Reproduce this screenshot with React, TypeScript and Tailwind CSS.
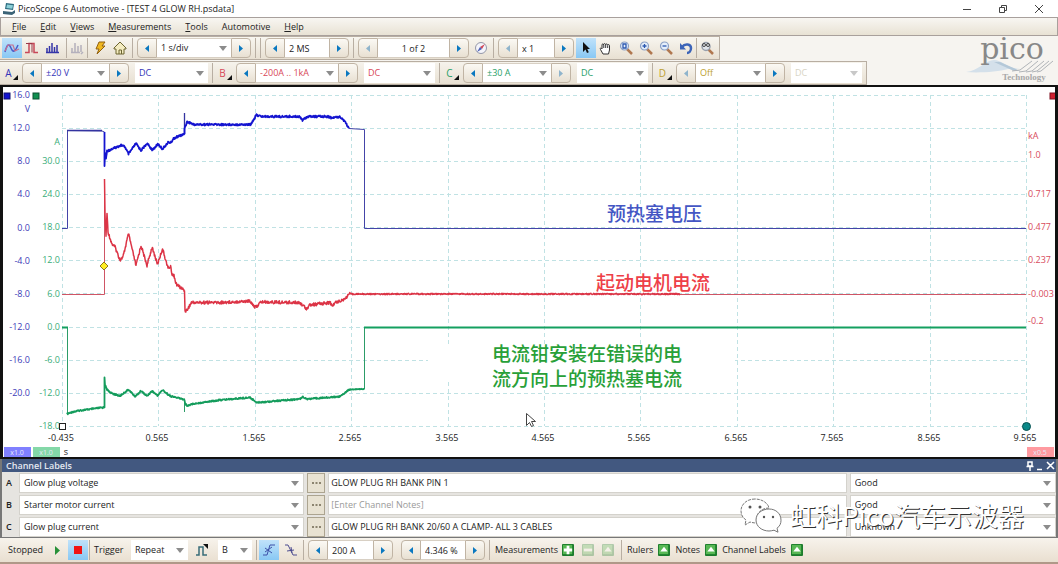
import React from "react";
import { clsx } from "clsx";

type Point = [number, number];

const blueTrace: Point[] = [
  [104.5, 132], [104.5, 167], [105, 152], [106, 159], [107, 151], [112, 149],
  [117, 147], [121, 145], [125, 147], [128.5, 154], [136, 143.5], [141, 150.5],
  [147, 143.5], [152.5, 150], [158, 144], [162.5, 149], [168, 142.5], [171, 142.5],
  [173.5, 138.5], [178, 136.5], [184.5, 134], [184.5, 128], [187, 122], [191, 123],
  [193, 124.5], [250.5, 124.5], [256.5, 115], [261.5, 116.5], [300, 116.5], [302.5, 120],
  [307.5, 116.5], [328, 116.5], [331.5, 118], [340, 116.5], [345, 121.5], [349, 128.5],
];

const redTrace: Point[] = [
  [104.5, 179], [105, 215], [106, 236], [107, 213], [108, 232], [112, 244],
  [115, 247], [120, 260], [123, 257], [128.5, 234], [136, 265.5], [141, 245.5],
  [147, 265.5], [152, 247.5], [157.5, 264], [162.5, 249], [168, 268], [171, 267],
  [172, 275], [174, 275], [176, 284], [184.5, 290.5], [185, 311], [187, 310],
  [191.5, 302.5], [220, 302.5], [250, 301], [255.5, 307.5], [261, 302], [300, 302.5],
  [306.5, 308.5], [310, 305], [330, 302.5], [332.5, 306], [336, 302], [345, 299],
  [349, 294], [680, 294],
];

const greenTrace: Point[] = [
  [67, 414], [72, 412], [80, 410.5], [103, 407.5], [104.5, 407], [104.5, 377], [105, 385],
  [107, 389.5], [111, 393], [120, 396], [128.5, 389.5], [135, 396.5], [141, 391],
  [147, 396], [152, 391], [157.5, 395.5], [162.5, 390], [170, 396], [184.5, 399.5],
  [185, 403.5], [187.5, 406], [191.5, 404], [220, 400], [250, 397.5], [257, 402.5],
  [300, 399], [302.5, 396.5], [307, 399], [340, 396.5], [349, 389.5], [364.5, 389],
];

// repeatable noise, so that the traces don't change between renders
function noise(i: number) {
  const n = Math.sin(i * 12.9898) * 43758.5453;
  return (n - Math.floor(n)) * 2 - 1;
}

function tracePath(points: Point[], amp: number) {
  let d = `M${points[0][0]} ${points[0][1]}`;
  let n = 0;
  for (let i = 1; i < points.length; i++) {
    const [x0, y0] = points[i - 1];
    const [x1, y1] = points[i];
    const steps = Math.max(1, Math.round((x1 - x0) / 0.4));
    for (let s = 1; s <= steps; s++) {
      const x = x0 + ((x1 - x0) * s) / steps;
      const a = x > 350 ? amp * 0.4 : amp;
      const y = y0 + ((y1 - y0) * s) / steps + noise(n++) * a;
      d += `L${x.toFixed(1)} ${y.toFixed(1)}`;
    }
  }
  return d;
}

const gridX = Array.from({ length: 11 }, (_, i) => Math.round(62 + i * 96.4) + 0.5);
const gridY = Array.from({ length: 11 }, (_, i) => Math.round(94.5 + i * 33.15) + 0.5);

const voltLabels = ["16.0", "12.0", "8.0", "4.0", "0.0", "-4.0", "-8.0", "-12.0", "-16.0", "-20.0"];
const ampLabels = ["30.0", "24.0", "18.0", "12.0", "6.0", "0.0", "-6.0", "-12.0", "-18.0"];
const timeLabels = ["-0.435", "0.565", "1.565", "2.565", "3.565", "4.565", "5.565", "6.565", "7.565", "8.565", "9.565"];
const kiloAmpLabels: [string, number][] = [
  ["kA", 139], ["1.0", 158], ["0.717", 197], ["0.477", 230],
  ["0.237", 263], ["-0.003", 297], ["-0.2", 324],
];

const ScopeChart = () => (
  <svg viewBox="3 87 1052 370" className="block w-full h-auto bg-white" fontSize="9" role="img" aria-label="Scope view">
    <g stroke="#c0e2e4" strokeDasharray="4 3">
      {gridX.map((x) => (
        <line key={x} x1={x} x2={x} y1="95" y2="426" />
      ))}
      {gridY.map((y) => (
        <line key={y} x1="62" x2="1026" y1={y} y2={y} />
      ))}
    </g>
    <rect x="428" y="344" width="307" height="36" fill="#fff" />
    <rect x="486" y="370" width="206" height="20" fill="#fff" />

    <g fill="#3c3cb8" textAnchor="end">
      {voltLabels.map((t, i) => (
        <text key={t} x="30" y={98 + Math.round(i * 33.15)}>{t}</text>
      ))}
      <text x="30" y="112">V</text>
    </g>
    <g fill="#38ac78" textAnchor="end">
      <text x="60" y="145">A</text>
      {ampLabels.map((t, i) => (
        <text key={t} x="60" y={164 + Math.round(i * 33.15)}>{t}</text>
      ))}
    </g>
    <g fill="#d84c5c">
      {kiloAmpLabels.map(([t, y]) => (
        <text key={t} x="1028" y={y}>{t}</text>
      ))}
    </g>
    <g fill="#222" textAnchor="middle">
      {timeLabels.map((t, i) => (
        <text key={t} x={Math.round(61 + i * 96.4)} y="441">{t}</text>
      ))}
      <text x="66" y="455">s</text>
    </g>

    <g fill="none" strokeLinejoin="round">
      <path d="M62 228.500H67.500V130.500L102 131L104.500 132V140M349 128.500L364.500 129.500V228.500H1026" stroke="#4444a8" />
      <path d="M67 130.500H102M184.500 134V113" stroke="#3434a0" strokeWidth="1.300" />
      <path d={tracePath(blueTrace, 1)} stroke="#1414d0" strokeWidth="1.800" />
      <path d="M62 294.500H104.500V179M680 294.500H1026" stroke="#cf5565" />
      <path d={tracePath(redTrace, 1.6)} stroke="#dc3446" strokeWidth="1.500" />
      <path d="M62 327.500H67.500V414M184.500 399V412M364.500 389V327.500" stroke="#2c9c68" />
      <path d="M364 327.500H1026M62 327.500H68" stroke="#14a060" strokeWidth="2" />
      <path d={tracePath(greenTrace, 0.7)} stroke="#149c5c" strokeWidth="1.800" />
    </g>

    <path d="M104 262l4 4-4 4-4-4z" fill="#ffee22" stroke="#8a7a20" />
    <rect x="59.500" y="423.500" width="6" height="6" fill="#fff" stroke="#222" />
    <circle cx="1026.500" cy="426.500" r="4" fill="#0a8888" stroke="#075050" />
    <rect x="4" y="93" width="6" height="6" fill="#1414d0" stroke="#101070" />
    <rect x="33" y="93" width="6" height="6" fill="#109050" stroke="#0a5030" />
    <rect x="1050" y="93" width="6" height="6" fill="#d02030" stroke="#801020" />

    <rect x="4" y="447" width="27" height="10" fill="#8080ff" />
    <rect x="33" y="447" width="27" height="10" fill="#84d8a8" />
    <rect x="1027" y="447" width="27" height="10" fill="#ff9aa0" />
    <g fill="#e4e8f8" fontSize="7" textAnchor="middle">
      <text x="17" y="455">x1.0</text>
      <text x="46" y="455">x1.0</text>
      <text x="1040" y="455">x0.5</text>
    </g>

    <g className="font-['Liberation_Serif','Noto_Sans_CJK_SC',serif]" fontSize="19" fontWeight="500">
      <text x="607" y="221" fill="#4456c4">预热塞电压</text>
      <text x="596" y="290" fill="#ee4048">起动电机电流</text>
      <g fill="#28a038">
        <text x="492" y="361">电流钳安装在错误的电</text>
        <text x="492" y="386">流方向上的预热塞电流</text>
      </g>
    </g>
    <path d="M526.500 413.500v12l3-3 2 4 2-1-2-4h4z" fill="#fff" stroke="#444" />
  </svg>
);

const Caret = ({ className }: { className?: string }) => (
  <svg viewBox="0 0 8 5" className={clsx("h-[5px] w-2 shrink-0", className)}>
    <path d="M0 0h8L4 5z" fill="currentColor" />
  </svg>
);

type PickProps = { id?: string; value: string; label: string; className?: string; disabled?: boolean };

const Pick = ({ id, value, label, className, disabled }: PickProps) => (
  <div className={clsx("relative flex h-full bg-white", className)}>
    <select
      id={id}
      aria-label={label}
      defaultValue={value}
      disabled={disabled}
      className="w-full appearance-none bg-transparent pl-1 pr-4 outline-none"
    >
      <option>{value}</option>
    </select>
    <Caret className={clsx("pointer-events-none absolute right-1 top-1/2 -mt-0.5", disabled ? "text-[#c8c8c8]" : "text-[#8c8c8c]")} />
  </div>
);

const StepButton = ({ dir, off, label }: { dir: "left" | "right"; off?: boolean; label: string }) => (
  <button
    type="button"
    aria-label={label}
    className={clsx(
      "flex h-full w-5 shrink-0 items-center justify-center border border-[#c0b4a4] bg-linear-to-b from-[#fbf9f4] to-[#e8e0d2]",
      dir === "left" ? "rounded-l" : "rounded-r",
      off ? "text-[#8fb4cc]" : "text-[#0a78c0]"
    )}
  >
    <svg viewBox="0 0 4 7" className="h-[7px] w-1">
      <path d={dir === "left" ? "M4 0v7L0 3.500z" : "M0 0v7l4-3.500z"} fill="currentColor" />
    </svg>
  </button>
);

type StepperProps = {
  label: string;
  value: string;
  width: string;
  pick?: boolean;
  prevOff?: boolean;
  nextOff?: boolean;
  center?: boolean;
};

const Stepper = ({ label, value, width, pick, prevOff, nextOff, center }: StepperProps) => (
  <div className="flex h-5 shrink-0">
    <StepButton dir="left" off={prevOff} label={`${label} down`} />
    {pick ? (
      <Pick label={label} value={value} className={clsx(width, "border-y border-[#d8d0c4]")} />
    ) : (
      <input
        aria-label={label}
        defaultValue={value}
        className={clsx("h-full border-y border-[#d8d0c4] bg-white px-1 outline-none", width, center && "text-center")}
      />
    )}
    <StepButton dir="right" off={nextOff} label={`${label} up`} />
  </div>
);

const Divider = () => <div className="h-5 w-px shrink-0 bg-[#b8aea2]" />;

const IconButton = ({ label, active, children }: { label: string; active?: boolean; children: React.ReactNode }) => (
  <button
    type="button"
    aria-label={label}
    className={clsx(
      "flex h-5 w-5 shrink-0 items-center justify-center",
      active && "bg-linear-to-b from-[#c0e2fa] to-[#88c8f4]"
    )}
  >
    <svg viewBox="0 0 16 16" className="size-4" fill="none">
      {children}
    </svg>
  </button>
);

const Magnifier = ({ sign }: { sign?: string }) => (
  <>
    <path d="M9 9l5 5" stroke="#b07850" strokeWidth="2.500" />
    <circle cx="6.500" cy="6" r="4" fill="#e4eefa" stroke="#8ca0c4" strokeWidth="1.200" />
    {sign && <path d={sign} stroke="#2c58b0" strokeWidth="1.300" />}
  </>
);

const menu = ["File", "Edit", "Views", "Measurements", "Tools", "Automotive", "Help"];

const channels = [
  { id: "A", range: "±20 V", coupling: "DC", color: "text-[#3434b8]", field: "w-[67px]", dc: "w-[73px]" },
  { id: "B", range: "-200A .. 1kA", coupling: "DC", color: "text-[#d84858]", field: "w-[82px]", dc: "w-[71px]" },
  { id: "C", range: "±30 A", coupling: "DC", color: "text-[#28a068]", field: "w-[68px]", dc: "w-[71px]", nextOff: true },
  { id: "D", range: "Off", coupling: "DC", color: "text-[#bca030]", field: "w-[69px]", dc: "w-[71px]", prevOff: true, off: true },
];

const labelRows = [
  { id: "A", name: "Glow plug voltage", note: "GLOW PLUG RH BANK PIN 1", state: "Good" },
  { id: "B", name: "Starter motor current", note: "", state: "Good" },
  { id: "C", name: "Glow plug current", note: "GLOW PLUG RH BANK 20/60 A CLAMP- ALL 3 CABLES", state: "Unknown" },
];

const TitleBar = () => (
  <header className="flex h-[17px] items-center bg-white pl-0.5 text-[#222]">
    <svg viewBox="0 0 14 14" className="size-3.5">
      <path d="M4 1l8 1-1 6-8-1z" fill="#2c6c80" />
      <path d="M5 2.500l6 .8-.7 3.500-6-.8z" fill="#8cd0d8" />
      <path d="M1 9l9 1 3-2v3l-3 2-9-1z" fill="#3c6478" />
    </svg>
    <h1 className="ml-0.5 grow">PicoScope 6 Automotive - [TEST 4 GLOW RH.psdata]</h1>
    <div className="flex items-center gap-[26px] pr-3.5">
      <button type="button" aria-label="Minimize">
        <svg viewBox="0 0 10 10" className="size-2.5"><path d="M1 5.500h8" stroke="#444" /></svg>
      </button>
      <button type="button" aria-label="Restore">
        <svg viewBox="0 0 10 10" className="size-2.5" fill="none" stroke="#444">
          <path d="M1.500 3.500h5v5h-5zM3.500 3V1.500h5v5H7" />
        </svg>
      </button>
      <button type="button" aria-label="Close">
        <svg viewBox="0 0 10 10" className="size-2.5"><path d="M1 1l8 8M9 1L1 9" stroke="#444" /></svg>
      </button>
    </div>
  </header>
);

const MainToolbar = () => (
  <div className="flex h-6 items-center self-start border border-l-0 border-[#b8aea2] bg-linear-to-b from-[#f8f6f0] to-[#e8e0d2] pr-0.5 pl-0.5 text-[#222]">
    <IconButton label="Scope mode" active>
      <path d="M1 12c2-8 4-9 6-4s4 4 7-3" stroke="#4c5cc8" strokeWidth="1.500" />
      <path d="M1 11l3-6h5l2 6 4-2" stroke="#c87090" strokeWidth="1.200" />
    </IconButton>
    <IconButton label="Persistence mode">
      <path d="M1 12.500h4V3.500h5v9h4" stroke="#c84858" strokeWidth="1.500" />
      <path d="M2 3.500h6v9" stroke="#983848" />
    </IconButton>
    <IconButton label="Spectrum mode">
      <path d="M2 12.500h13M3 12V8M5.500 12V6M8 12V3M10.500 12V7M13 12V5" stroke="#3434a8" strokeWidth="1.500" />
    </IconButton>
    <div className="w-1" />
    <Divider />
    <IconButton label="Spectrum options">
      <path d="M2 12.500h9M3 12V8M6 12V3M9 12V6M12 12V5M12 14l2-2" stroke="#b4b0bc" strokeWidth="1.500" />
    </IconButton>
    <Divider />
    <div className="ml-0.5 flex">
      <IconButton label="Auto setup">
        <path d="M7 2h6l-3 4h3l-8 8 2-5H4z" fill="#f0b820" stroke="#906010" />
      </IconButton>
      <IconButton label="Home">
        <path d="M2 8l6-6 6 6v1h-2v5H4V9H2z" fill="#f4ecc0" stroke="#6c6430" />
        <path d="M7 14v-4h2.500v4" stroke="#6c6430" />
      </IconButton>
    </div>
    <div className="ml-0.5 flex items-center gap-1">
      <Divider />
      <Stepper label="Timebase" value="1 s/div" width="w-[74px]" pick />
      <Divider />
      <Divider />
      <Stepper label="Samples" value="2 MS" width="w-[44px]" />
      <Divider />
      <Stepper label="Buffer" value="1 of 2" width="w-[71px]" center prevOff />
    </div>
    <div className="ml-0.5 flex">
      <IconButton label="Buffer overview">
        <circle cx="8" cy="8" r="5.500" fill="#f4f4fa" stroke="#9498a8" />
        <path d="M12 4L9 9 7 7z" fill="#d04858" />
        <path d="M4 12l3-5 2 2z" fill="#4c60b8" />
      </IconButton>
    </div>
    <div className="ml-0.5 flex items-center gap-1">
      <Divider />
      <Stepper label="Zoom factor" value="x 1" width="w-[36px]" prevOff />
    </div>
    <div className="ml-0.5 flex">
      <IconButton label="Select" active>
        <path d="M5 2v10l2.500-2.500L9 13l1.800-.8L9.300 9H12z" fill="#111" />
      </IconButton>
      <IconButton label="Hand">
        <path d="M5 14L2.500 9.500c-1-1.500.5-2 1.500-.5V5c0-1.500 1.500-1.500 1.700 0 0-2 1.800-2 2 0 .2-1.600 1.900-1.500 2 .3.300-1.200 1.700-1 1.800.5V10L10.500 14z" fill="#fff" stroke="#333" />
        <path d="M5.800 5v3M7.700 5v3M9.700 5.500V8" stroke="#333" />
      </IconButton>
      <IconButton label="Zoom window"><Magnifier sign="M5 4h3v4H5z" /></IconButton>
      <IconButton label="Zoom in"><Magnifier sign="M4.500 6h4M6.500 4v4" /></IconButton>
      <IconButton label="Zoom out"><Magnifier sign="M4.500 6h4" /></IconButton>
      <IconButton label="Undo zoom">
        <path d="M4 7c3-4 9-3 9 1 0 3-2 5-4 5" stroke="#3c64b8" strokeWidth="2.500" />
        <path d="M2 3v6.500h6z" fill="#3c64b8" />
      </IconButton>
      <Divider />
      <IconButton label="Zoom to full view">
        <path d="M9 9l5 5" stroke="#b07850" strokeWidth="2.500" />
        <circle cx="7" cy="6.500" r="4" fill="#e0e4ea" stroke="#98a0ac" strokeWidth="1.500" />
        <circle cx="5" cy="5" r="1.500" stroke="#444" />
        <circle cx="9" cy="5" r="1.500" stroke="#444" />
      </IconButton>
    </div>
  </div>
);

const ChannelToolbar = () => (
  <div className="flex h-6 items-center self-start border border-l-0 border-[#b8aea2] bg-linear-to-b from-[#f6f3ec] to-[#e8e0d2] pr-1 pl-0.5">
    {channels.map((ch, i) => (
      <div key={ch.id} className={clsx("flex items-center", ch.color)}>
        {i > 0 && <div className="mr-[3px] ml-1 flex"><Divider /></div>}
        <button type="button" aria-label={`Channel ${ch.id} options`} className="mr-0.5 flex h-5 w-[18px] items-center pl-0.5">
          <span className="w-[9px] text-[10px]">{ch.id}</span>
          <svg viewBox="0 0 5 5" className="mt-2 size-[5px]"><path d="M5 0v5H0z" fill="#111" /></svg>
        </button>
        <Stepper label={`Channel ${ch.id} range`} value={ch.range} width={ch.field} pick prevOff={ch.prevOff} nextOff={ch.nextOff} />
        <div className={clsx("ml-1.5 h-5", ch.off && "text-[#d8d4c4]")}>
          <Pick label={`Channel ${ch.id} coupling`} value={ch.coupling} disabled={ch.off} className={ch.dc} />
        </div>
      </div>
    ))}
  </div>
);

const Logo = () => (
  <svg viewBox="0 0 94 48" className="h-12 w-[94px] shrink-0 overflow-visible" aria-label="pico Technology">
    <path d="M2 36c12-1 20-12 28-12s12 8 26 9H44c-10 3-30 4-42 3z" fill="#d4e0ea" />
    <path d="M30 26h6l20 9h-6z" fill="#b4c8d8" />
    <g fill="none" stroke="#b0b4b8">
      <path d="M48 35l8-1 12-9M55 36l7-1 12-10M62 36l6-1 12-10M68 36l5-1 12-10M73 36l4-1 12-10" />
    </g>
    <text x="48" y="23" textAnchor="middle" fontSize="30" fill="#888" className="font-['DejaVu_Serif',serif]">pico</text>
    <text x="60" y="44" textAnchor="middle" fontSize="9" fontWeight="bold" fill="#a8a8a8" className="font-['Liberation_Serif',serif]">Technology</text>
  </svg>
);

const ChannelLabels = () => (
  <section className="relative border-x-2 border-b border-[#777] bg-[#e6e4e0]">
    <div className="flex h-[13px] items-center bg-[#425880] pr-px pl-1 text-white">
      <h2 className="grow font-semibold text-[#e4e8f0]">Channel Labels</h2>
      <svg viewBox="0 0 30 10" className="h-2.5 w-[30px]" fill="none" stroke="#fff" strokeWidth="1.500">
        <path d="M3 1h4v4H3zM1.500 5.500h7M5 6v4M12 8.500h5M22 1l7 7M29 1l-7 7" />
      </svg>
    </div>
    <div className="flex flex-col gap-0.5 pt-px">
      {labelRows.map((row) => (
        <div key={row.id} className="grid h-5 grid-cols-[14px_285fr_18px_518fr_206fr] gap-[3px] text-[#222]">
          <span className="self-center pl-1 font-semibold">{row.id}</span>
          <Pick label={`Channel ${row.id} label`} value={row.name} className="border border-[#d4d2cc]" />
          <button type="button" aria-label={`Browse labels for ${row.id}`} className="flex items-center justify-center border border-[#aca490] bg-[#e8e2d2]">
            <svg viewBox="0 0 9 2" className="h-0.5 w-[9px]" fill="#8c8470">
              <path d="M0 0h2v2H0zM3.500 0h2v2h-2zM7 0h2v2H7z" />
            </svg>
          </button>
          <input
            aria-label={`Channel ${row.id} notes`}
            defaultValue={row.note}
            placeholder="[Enter Channel Notes]"
            className="w-full border border-[#d4d2cc] bg-white px-0.5 outline-none placeholder:text-[#999]"
          />
          <Pick label={`Channel ${row.id} condition`} value={row.state} className="border border-[#d4d2cc]" />
        </div>
      ))}
    </div>
    <Watermark />
  </section>
);

const Watermark = () => (
  <div className="pointer-events-none absolute right-8 bottom-1 flex items-center gap-2">
    <svg viewBox="0 0 42 36" className="h-9 w-[42px]" fill="#fff" stroke="#777">
      <path d="M15 2C7 2 1 7 1 14c0 4 2 7 5 9l-1 5 5-3c2 .6 4 1 6 1l1-1C15 17 21 11 29 11 28 6 22 2 15 2z" strokeDasharray="3 1" />
      <path d="M29 12c-7 0-13 4.500-13 11s6 11 13 11c1.500 0 3-.3 5-.8l4 2-1-4c3-2 4-5 4-8 0-6.500-5-11.200-12-11.200z" />
      <g fill="#555" stroke="none">
        <circle cx="10" cy="10" r="1.500" /><circle cx="20" cy="10" r="1.500" />
        <circle cx="24" cy="20" r="1.200" /><circle cx="33" cy="20" r="1.200" />
      </g>
    </svg>
    <span className="text-[26px] leading-9 text-white font-['Noto_Sans_CJK_SC',sans-serif] [text-shadow:1px_1px_0_#333]">
      虹科Pico汽车示波器
    </span>
  </div>
);

const GreenButton = ({ label, d, off }: { label: string; d: string; off?: boolean }) => (
  <button type="button" aria-label={label} className={clsx("shrink-0", off && "opacity-30")}>
    <svg viewBox="0 0 13 13" className="size-3">
      <rect width="13" height="13" rx="1" fill="#1c7c2c" />
      <rect x="1" y="1" width="10" height="10" fill="#58b854" />
      <path d={d} fill="#fff" />
    </svg>
  </button>
);

const plus = "M5 2h3v3h3v3H8v3H5V8H2V5h3z";
const minus = "M2 5h9v3H2z";
const up = "M6.500 3l4 5h-8z";

const StatusBar = () => (
  <footer className="flex h-[26px] items-center border-b-2 border-[#b09888] bg-linear-to-b from-[#f7f3ec] to-[#e9dfd0] pl-2 text-[#222]">
    <div className="w-[45px]">Stopped</div>
    <div className="flex w-9 items-center gap-[7px]">
      <button type="button" aria-label="Start">
        <svg viewBox="0 0 8 9" className="h-[9px] w-2"><path d="M2 0l5 4.500L2 9z" fill="#289038" /></svg>
      </button>
      <IconButton label="Stop" active><path d="M4 4h8v8H4z" fill="#f01414" /></IconButton>
    </div>
    <Divider />
    <label htmlFor="trigger" className="ml-1 w-[37px]">Trigger</label>
    <div className="h-5">
      <Pick id="trigger" label="Trigger" value="Repeat" className="w-[57px]" />
    </div>
    <div className="mx-1 flex">
      <IconButton label="Advanced triggers">
        <path d="M2 13h3V5h4v8h4" stroke="#386c78" strokeWidth="1.500" />
        <path d="M9 2h5v5z" fill="#111" />
      </IconButton>
    </div>
    <div className="h-5 pl-0.5">
      <Pick label="Trigger source" value="B" className="w-[34px]" />
    </div>
    <div className="ml-1 flex items-center gap-0.5">
      <Divider />
      <IconButton label="Rising edge" active>
        <path d="M2 13h4l3-10h5" stroke="#3c50a8" />
        <path d="M4 6l7 5M11 5l-7 5" stroke="#3c50a8" />
      </IconButton>
      <IconButton label="Falling edge">
        <path d="M2 3h3l5 10h4" stroke="#4c4c90" />
        <path d="M4 9l7-1M8 5l1 6" stroke="#4c4c90" />
      </IconButton>
      <Divider />
    </div>
    <div className="ml-1 flex items-center gap-2">
      <Stepper label="Threshold" value="200 A" width="w-[45px]" />
      <Stepper label="Pre-trigger" value="4.346 %" width="w-[44px]" />
    </div>
    <div className="ml-1 flex items-center gap-[5px] whitespace-nowrap">
      <Divider />
      <span className="w-[62px]">Measurements</span>
      <div className="flex gap-2 pr-0.5">
        <GreenButton label="Add measurement" d={plus} />
        <GreenButton label="Delete measurement" d={minus} off />
        <GreenButton label="Edit measurement" d={up} off />
      </div>
      <Divider />
      <span>Rulers</span>
      <GreenButton label="Rulers" d={up} />
      <span>Notes</span>
      <GreenButton label="Notes" d={up} />
      <span>Channel Labels</span>
      <GreenButton label="Channel Labels" d={up} />
    </div>
  </footer>
);

const App = () => (
  <div className="flex min-h-screen flex-col bg-[#f6f4f0] text-[9px] leading-3 font-['Open_Sans',sans-serif]">
    <TitleBar />
    <nav className="flex h-[19px] items-center gap-3.5 border border-[#a8a09c] bg-linear-to-b from-[#f8f6f2] to-[#e8e2d4] pl-[11px] text-[#222]">
      {menu.map((item) => (
        <button key={item} type="button">
          {item === "Automotive" ? item : <><u>{item[0]}</u>{item.slice(1)}</>}
        </button>
      ))}
    </nav>
    <div className="flex items-start justify-between">
      <div className="flex flex-col gap-px">
        <MainToolbar />
        <ChannelToolbar />
      </div>
      <Logo />
    </div>
    <main className="border-x-3 border-y-2 border-[#111]">
      <ScopeChart />
    </main>
    <ChannelLabels />
    <StatusBar />
  </div>
);

export default App;
